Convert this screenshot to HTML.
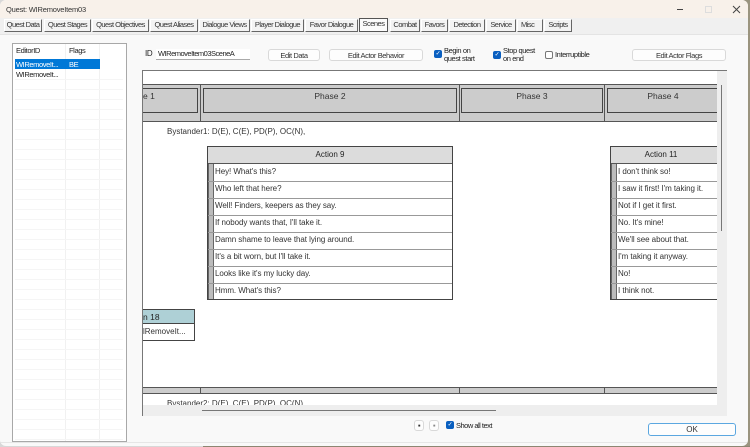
<!DOCTYPE html>
<html>
<head>
<meta charset="utf-8">
<style>
html,body{margin:0;padding:0;background:#9a947f}
#r{position:relative;width:750px;height:447px;overflow:hidden;background:#9a947f;font-family:"Liberation Sans",sans-serif;font-size:7.5px;letter-spacing:-.4px;color:#222}
#r div{position:absolute;box-sizing:border-box;white-space:nowrap}
.t{line-height:10px;height:10px}
.tab{top:19px;height:13px;background:#f3f3f3;border:1px solid #fff;border-right:1px solid #666;border-bottom:1px solid #666;text-align:center;line-height:10px;font-size:7.5px;letter-spacing:-.52px;color:#333}
.btn{background:#fdfdfd;border:1px solid #d9d9d9;border-radius:3px;text-align:center;font-size:7.5px;line-height:11px;color:#333;top:49px;height:12px}
.cb{width:8px;height:8px;background:#0a5fc0;border-radius:2px;color:#fff;font-size:6px;line-height:8px;text-align:center}
.sep{background:#999;height:1px}
.grip{background:#bcbcbc;border-left:1px solid #666;border-right:1px solid #666}
.rowt{font-size:8px;letter-spacing:-.06px;line-height:10px;color:#333}
.ph{font-size:8.5px;letter-spacing:0;color:#333;text-align:center}
</style>
</head>
<body>
<div id="r">
  <!-- desktop surround -->
  <div style="left:0;top:0;width:378px;height:447px;background:#d8d8d8"></div>
  <div style="left:203px;top:446px;width:547px;height:1px;background:#8d8672"></div>
  <!-- window -->
  <div style="left:0;top:0;width:748px;height:446px;background:#f9f9f9;border-radius:6px;overflow:hidden">
    <div style="left:0;top:0;width:748px;height:18px;background:#f8f1ea"></div>
    <div style="left:0;top:18px;width:748px;height:17px;background:#f0f0f0;border-bottom:1px solid #e4e4e4"></div>
    <div style="left:0;top:442px;width:748px;height:1px;background:#e6e6e6"></div>
  </div>
  <div class="t" style="left:6px;top:5px;color:#333;letter-spacing:-.2px">Quest: WIRemoveItem03</div>
  <div style="left:677px;top:9px;width:6px;height:1px;background:#444"></div>
  <div style="left:705px;top:6px;width:7px;height:7px;border:1px solid #ddd"></div>
  <svg style="position:absolute;left:732px;top:5px" width="9" height="9"><path d="M1 1L8 8M8 1L1 8" stroke="#444" stroke-width="1" fill="none"/></svg>

  <!-- tabs -->
  <div class="tab" style="left:4px;width:38px">Quest Data</div>
  <div class="tab" style="left:44px;width:47px">Quest Stages</div>
  <div class="tab" style="left:92px;width:57px">Quest Objectives</div>
  <div class="tab" style="left:150px;width:48px">Quest Aliases</div>
  <div class="tab" style="left:199px;width:51px">Dialogue Views</div>
  <div class="tab" style="left:251px;width:53px">Player Dialogue</div>
  <div class="tab" style="left:305px;width:53px">Favor Dialogue</div>
  <div class="tab" style="left:359px;width:29px;top:18px;height:14px;background:#fbfbfb;border:1px solid #555">Scenes</div>
  <div class="tab" style="left:390px;width:30px">Combat</div>
  <div class="tab" style="left:421px;width:27px">Favors</div>
  <div class="tab" style="left:449px;width:36px">Detection</div>
  <div class="tab" style="left:486px;width:30px">Service</div>
  <div class="tab" style="left:517px;width:26px;text-align:left;padding-left:3px">Misc</div>
  <div class="tab" style="left:544px;width:28px">Scripts</div>

  <!-- list -->
  <div style="left:12px;top:43px;width:115px;height:399px;background:#fff;border:1px solid #a8a8a8"></div>
  <div style="left:65px;top:44px;width:1px;height:397px;background:#f1f1f1"></div>
  <div style="left:99px;top:44px;width:1px;height:397px;background:#f1f1f1"></div>
  <div style="left:15px;top:79px;width:108px;height:361px;background:repeating-linear-gradient(to bottom,#f5f5f5 0,#f5f5f5 1px,transparent 1px,transparent 10px)"></div>
  <div class="t" style="left:16px;top:46px">EditorID</div>
  <div class="t" style="left:69px;top:46px">Flags</div>
  <div style="left:15px;top:59px;width:85px;height:10px;background:#0078d7"></div>
  <div class="t" style="left:16px;top:60px;color:#fff">WIRemoveIt...</div>
  <div class="t" style="left:69px;top:60px;color:#fff">BE</div>
  <div class="t" style="left:16px;top:70px">WIRemoveIt...</div>

  <!-- top controls -->
  <div class="t" style="left:145px;top:49px;font-size:8px">ID</div>
  <div style="left:156px;top:49px;width:94px;height:11px;background:#fff;border-bottom:1px solid #aaa"></div>
  <div class="t" style="left:158px;top:49px;letter-spacing:-.5px">WIRemoveItem03SceneA</div>
  <div class="btn" style="left:268px;width:52px;">Edit Data</div>
  <div class="btn" style="left:329px;width:94px;">Edit Actor Behavior</div>
  <div class="cb" style="left:434px;top:50px">✓</div>
  <div class="t" style="left:444px;top:46px">Begin on</div>
  <div class="t" style="left:444px;top:54px">quest start</div>
  <div class="cb" style="left:493px;top:51px">✓</div>
  <div class="t" style="left:503px;top:46px">Stop quest</div>
  <div class="t" style="left:503px;top:54px">on end</div>
  <div style="left:545px;top:51px;width:8px;height:8px;background:#fff;border:1px solid #777;border-radius:2px"></div>
  <div class="t" style="left:555px;top:50px">Interruptible</div>
  <div class="btn" style="left:632px;width:94px;">Edit Actor Flags</div>

  <!-- scene panel -->
  <div style="left:142px;top:70px;width:585px;height:346px;background:#eeeeee;border-top:1px solid #777;border-left:1px solid #777"></div>
  <div style="left:143px;top:71px;width:574px;height:334px;background:#fff;overflow:hidden" id="sc">
    <!-- phase bar -->
    <div style="left:0;top:13px;width:574px;height:38px;background:#cccccc;border-top:1px solid #555;border-bottom:1px solid #555"></div>
    <div style="left:-5px;top:17px;width:60px;height:25px;border:1px solid #444"></div>
    <div style="left:57px;top:14px;width:1px;height:36px;background:#555"></div>
    <div style="left:60px;top:17px;width:254px;height:25px;border:1px solid #444"></div>
    <div style="left:316px;top:14px;width:1px;height:36px;background:#555"></div>
    <div style="left:318px;top:17px;width:142px;height:25px;border:1px solid #444"></div>
    <div style="left:461px;top:14px;width:1px;height:36px;background:#555"></div>
    <div style="left:464px;top:17px;width:120px;height:25px;border:1px solid #444"></div>
    <div class="t ph" style="left:0;top:20px;text-align:left">e 1</div>
    <div class="t ph" style="left:60px;width:254px;top:20px">Phase 2</div>
    <div class="t ph" style="left:318px;width:142px;top:20px">Phase 3</div>
    <div class="t ph" style="left:464px;width:112px;top:20px">Phase 4</div>

    <div class="t" style="left:24px;top:56px;font-size:8px;letter-spacing:0;color:#333">Bystander1: D(E), C(E), PD(P), OC(N),</div>

    <!-- Action 9 -->
    <div style="left:64px;top:75px;width:246px;height:154px;border:1px solid #444;background:#fff"></div>
    <div style="left:65px;top:76px;width:244px;height:17px;background:#dcdcdc;border-bottom:1px solid #555"></div>
    <div class="t" style="left:65px;width:244px;top:79px;text-align:center;font-size:8px;letter-spacing:0">Action 9</div>
    <div class="grip" style="left:65px;top:93px;width:6px;height:135px"></div>
    <div class="sep" style="left:65px;top:110px;width:244px"></div>
    <div class="sep" style="left:65px;top:127px;width:244px"></div>
    <div class="sep" style="left:65px;top:144px;width:244px"></div>
    <div class="sep" style="left:65px;top:161px;width:244px"></div>
    <div class="sep" style="left:65px;top:178px;width:244px"></div>
    <div class="sep" style="left:65px;top:195px;width:244px"></div>
    <div class="sep" style="left:65px;top:212px;width:244px"></div>
    <div class="rowt" style="left:72px;top:96px">Hey! What's this?</div>
    <div class="rowt" style="left:72px;top:113px">Who left that here?</div>
    <div class="rowt" style="left:72px;top:130px">Well! Finders, keepers as they say.</div>
    <div class="rowt" style="left:72px;top:147px">If nobody wants that, I'll take it.</div>
    <div class="rowt" style="left:72px;top:164px">Damn shame to leave that lying around.</div>
    <div class="rowt" style="left:72px;top:181px">It's a bit worn, but I'll take it.</div>
    <div class="rowt" style="left:72px;top:198px">Looks like it's my lucky day.</div>
    <div class="rowt" style="left:72px;top:215px">Hmm. What's this?</div>

    <!-- Action 11 -->
    <div style="left:467px;top:75px;width:130px;height:154px;border:1px solid #444;background:#fff"></div>
    <div style="left:468px;top:76px;width:128px;height:17px;background:#dcdcdc;border-bottom:1px solid #555"></div>
    <div class="t" style="left:468px;width:100px;top:79px;text-align:center;font-size:8px;letter-spacing:0">Action 11</div>
    <div class="grip" style="left:468px;top:93px;width:6px;height:135px"></div>
    <div class="sep" style="left:468px;top:110px;width:128px"></div>
    <div class="sep" style="left:468px;top:127px;width:128px"></div>
    <div class="sep" style="left:468px;top:144px;width:128px"></div>
    <div class="sep" style="left:468px;top:161px;width:128px"></div>
    <div class="sep" style="left:468px;top:178px;width:128px"></div>
    <div class="sep" style="left:468px;top:195px;width:128px"></div>
    <div class="sep" style="left:468px;top:212px;width:128px"></div>
    <div class="rowt" style="left:475px;top:96px">I don't think so!</div>
    <div class="rowt" style="left:475px;top:113px">I saw it first! I'm taking it.</div>
    <div class="rowt" style="left:475px;top:130px">Not if I get it first.</div>
    <div class="rowt" style="left:475px;top:147px">No. It's mine!</div>
    <div class="rowt" style="left:475px;top:164px">We'll see about that.</div>
    <div class="rowt" style="left:475px;top:181px">I'm taking it anyway.</div>
    <div class="rowt" style="left:475px;top:198px">No!</div>
    <div class="rowt" style="left:475px;top:215px">I think not.</div>

    <!-- Action 18 -->
    <div style="left:-2px;top:238px;width:54px;height:32px;border:1px solid #444;background:#fff"></div>
    <div style="left:0;top:239px;width:51px;height:14px;background:#aed0d6;border-bottom:1px solid #444"></div>
    <div class="t" style="left:0;top:241px;font-size:8.5px;letter-spacing:0">n 18</div>
    <div class="t" style="left:0;top:256px;color:#333;font-size:8px;letter-spacing:0">lRemoveIt...</div>

    <!-- second phase bar -->
    <div style="left:0;top:316px;width:574px;height:7px;background:#cccccc;border-top:1px solid #555;border-bottom:1px solid #555"></div>
    <div style="left:57px;top:316px;width:1px;height:7px;background:#555"></div>
    <div style="left:316px;top:316px;width:1px;height:7px;background:#555"></div>
    <div style="left:461px;top:316px;width:1px;height:7px;background:#555"></div>
    <div class="t" style="left:24px;top:328px;font-size:8px;letter-spacing:0;color:#333">Bystander2: D(E), C(E), PD(P), OC(N)</div>
  </div>
  <div style="left:721px;top:85px;width:1px;height:146px;background:#777"></div>
  <div style="left:202px;top:410px;width:294px;height:1px;background:#777"></div>

  <!-- bottom -->
  <div class="btn" style="left:414px;top:420px;width:10px;height:11px;line-height:10px">▪</div>
  <div class="btn" style="left:429px;top:420px;width:10px;height:11px;line-height:10px;color:#888">▪</div>
  <div class="cb" style="left:446px;top:421px">✓</div>
  <div class="t" style="left:456px;top:421px;letter-spacing:-.5px">Show all text</div>
  <div style="left:648px;top:423px;width:88px;height:13px;background:#fdfdfd;border:1px solid #5ba7e0;border-radius:3px;text-align:center;line-height:11px;font-size:8px;letter-spacing:0;color:#333">OK</div>
</div>
</body>
</html>
